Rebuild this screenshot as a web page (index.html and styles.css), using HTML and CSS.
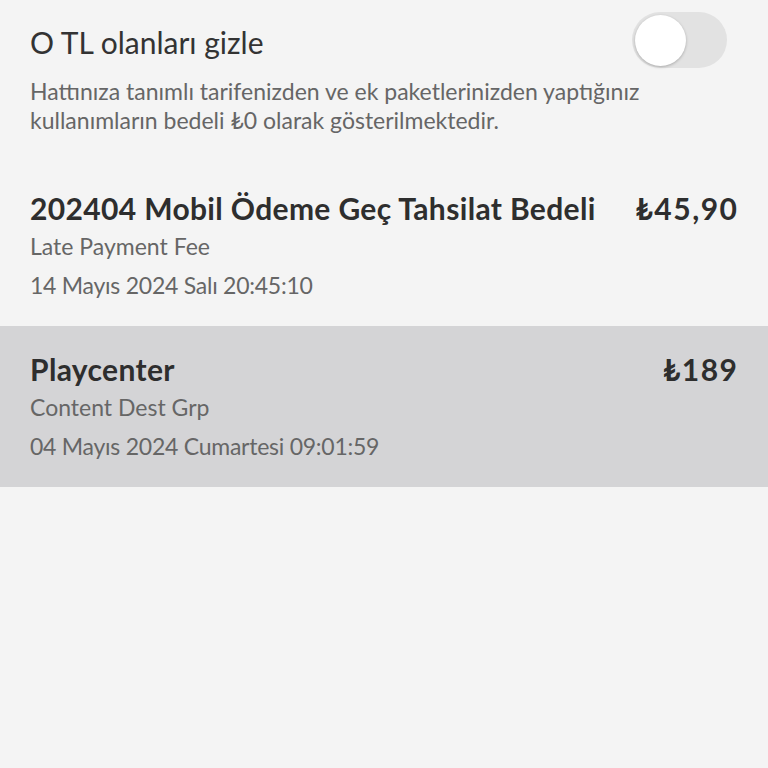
FILE: index.html
```html
<!DOCTYPE html>
<html lang="tr">
<head>
    <meta charset="UTF-8">
    <meta name="viewport" content="width=device-width, initial-scale=1.0">
    <title>Kullanımlar</title>
    <link rel="stylesheet" href="styles.css">
</head>
<body>
    <div class="filter">
        <div class="filter-row">
            <span class="filter-label">O TL olanları gizle</span>
            <div class="toggle"><div class="knob"></div></div>
        </div>
        <p class="filter-info">Hattınıza tanımlı tarifenizden ve ek paketlerinizden yaptığınız kullanımların bedeli ₺0 olarak gösterilmektedir.</p>
    </div>
    <div class="usage-list">
        <div class="usage">
            <div class="usage-top">
                <h3>202404 Mobil Ödeme Geç Tahsilat Bedeli</h3>
                <span class="price">₺45,90</span>
            </div>
            <div class="usage-sub">Late Payment Fee</div>
            <div class="usage-date">14 Mayıs 2024 Salı 20:45:10</div>
        </div>
        <div class="usage selected">
            <div class="usage-top">
                <h3>Playcenter</h3>
                <span class="price">₺189</span>
            </div>
            <div class="usage-sub">Content Dest Grp</div>
            <div class="usage-date">04 Mayıs 2024 Cumartesi 09:01:59</div>
        </div>
    </div>
</body>
</html>
```

FILE: styles.css
```css
body {
    margin: 0;
    background-color: #f4f4f4;
    font-family: Lato, "Open Sans", sans-serif;
    color: #333;
}
.filter {
    padding: 12px 41px 0 30px;
}
.filter-row {
    display: flex;
    justify-content: space-between;
    align-items: center;
}
.filter-label {
    font-size: 30px;
    line-height: 36px;
    margin-top: 4px;
    color: #333;
}
.toggle {
    width: 95px;
    height: 56px;
    border-radius: 28px;
    background-color: #e2e2e2;
    display: flex;
    align-items: center;
    padding-left: 3px;
    box-sizing: border-box;
}
.knob {
    width: 51px;
    height: 51px;
    border-radius: 50%;
    background-color: #fff;
    box-shadow: 0 1px 3px rgba(0, 0, 0, 0.25);
}
.filter-info {
    margin: 9px 0 0;
    font-size: 23px;
    line-height: 29px;
    color: #666;
    padding-right: 60px;
}
.usage-list {
    margin-top: 30px;
}
.usage {
    height: 161px;
    box-sizing: border-box;
    padding: 25px 31px 0 30px;
}
.usage.selected {
    background-color: #d4d4d6;
}
.usage-top {
    display: flex;
    justify-content: space-between;
    align-items: center;
    line-height: 36px;
}
.usage-top h3 {
    margin: 0;
    font-size: 30px;
    font-weight: 700;
    letter-spacing: 0.35px;
    color: #2e2e2e;
}
.price {
    font-size: 30px;
    font-weight: 700;
    letter-spacing: 1.5px;
    margin-right: -1.5px;
    color: #2e2e2e;
}
.usage-sub, .usage-date {
    font-size: 23px;
    line-height: 30px;
    color: #666;
}
.usage-sub {
    margin-top: 5px;
}
.usage-date {
    margin-top: 9px;
    letter-spacing: -0.25px;
}
```
